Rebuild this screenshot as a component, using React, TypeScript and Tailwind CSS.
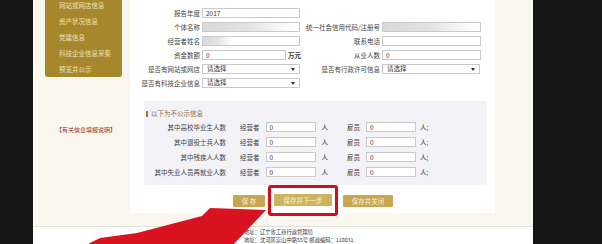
import React from 'react'

const font = { fontFamily: '"Noto Sans CJK SC", "Noto Sans", sans-serif' }

function Field({ value = '', blur = '', className = 'w-[98px]' }: { value?: string; blur?: string; className?: string }) {
    return (
        <div className={`relative h-[10px] shrink-0 border border-[#c9c9c9] bg-white text-[6.5px] leading-[8px] pl-[3px] text-[#333] overflow-hidden ${className}`}>
            {blur && <div className={`absolute inset-y-0 left-0 bg-gradient-to-r from-[#d9d9d9] via-[#e2e2e2] to-white ${blur}`} />}
            <span className="relative">{value}</span>
        </div>
    )
}

function Select() {
    return (
        <div className="h-[10px] w-[98px] shrink-0 border border-[#c9c9c9] bg-white flex items-center justify-between pl-[4px] pr-[4px] text-[6.5px] text-[#333]">
            <span>请选择</span>
            <svg width="4" height="3" viewBox="0 0 4 3"><path d="M0 0H4L2 3Z" fill="#333" /></svg>
        </div>
    )
}

function Label({ children, className = 'w-[70px]' }: { children: React.ReactNode; className?: string }) {
    return <div className={`shrink-0 text-right text-[6.5px] leading-[10px] text-[#444] whitespace-nowrap ${className}`}>{children}</div>
}

const menu = ['网站或网店信息', '资产状况信息', '党建信息', '科技企业信息采集', '预览并公示']
const privateRows = ['其中高校毕业生人数', '其中退役士兵人数', '其中残疾人人数', '其中失业人员再就业人数']

export default function App() {
    return (
        <div className="relative w-[602px] h-[244px] overflow-hidden flex bg-[#161616]" style={font}>
            <div className="w-[33px] shrink-0" />

            <div className="w-[500px] shrink-0 flex flex-col">
                {/* upper cream area */}
                <div className="h-[226px] shrink-0 bg-[#faf7ee] flex">
                    {/* sidebar */}
                    <div className="w-[97px] shrink-0">
                        <div className="ml-[12px] w-[77px] h-[77px] bg-[#a7872c] rounded-b-[3px] overflow-hidden">
                            <div className="mt-[-3px] pl-[14px]">
                                {menu.map(m => (
                                    <div key={m} className="h-[16px] leading-[16px] text-[6.5px] text-[#eee2bb] whitespace-nowrap">{m}</div>
                                ))}
                            </div>
                        </div>
                        <div className="mt-[49px] pl-[23px] text-[6px] leading-[8px] text-[#8e3131] whitespace-nowrap">【有关信息填报说明】</div>
                    </div>

                    {/* white panel */}
                    <div className="w-[365px] h-[213px] shrink-0 bg-white flex flex-col">
                        <div className="pt-[8px] flex flex-col gap-[4px]">
                            <div className="flex gap-[2px]">
                                <Label>报告年度</Label>
                                <Field value="2017" />
                            </div>
                            <div className="flex gap-[2px]">
                                <Label>个体名称</Label>
                                <Field blur="w-[90px]" />
                                <Label className="w-[78px]">统一社会信用代码/注册号</Label>
                                <Field blur="w-[90px]" className="w-[99px]" />
                            </div>
                            <div className="flex gap-[2px]">
                                <Label>经营者姓名</Label>
                                <Field blur="w-[28px]" />
                                <Label className="w-[78px]">联系电话</Label>
                                <Field className="w-[99px]" />
                            </div>
                            <div className="flex gap-[2px]">
                                <Label>资金数额</Label>
                                <div className="w-[98px] shrink-0 flex gap-[2px] whitespace-nowrap">
                                    <Field value="0" className="w-[84px]" />
                                    <span className="text-[6.5px] leading-[10px] font-bold text-[#333]">万元</span>
                                </div>
                                <Label className="w-[78px]">从业人数</Label>
                                <Field value="0" className="w-[99px]" />
                            </div>
                            <div className="flex gap-[2px]">
                                <Label>是否有网站或网店</Label>
                                <Select />
                                <Label className="w-[78px]">是否有行政许可信息</Label>
                                <div className="w-[99px]"><Select /></div>
                            </div>
                            <div className="flex gap-[2px]">
                                <Label>是否有科技企业信息</Label>
                                <Select />
                            </div>
                        </div>

                        {/* not public block */}
                        <div className="mt-[13px] ml-[14px] w-[343px] bg-[#f3f2f7] pt-[9px] pb-[8px]">
                            <div className="flex items-center gap-[3px] pl-[2px] h-[8px]">
                                <div className="w-[2px] h-[6px] bg-[#9a7a2e]" />
                                <span className="text-[6.5px] text-[#8c7048]">以下为不公示信息</span>
                            </div>
                            <div className="mt-[4px] flex flex-col gap-[5px]">
                                {privateRows.map(r => (
                                    <div key={r} className="flex items-center h-[10px] text-[6.5px] leading-[10px] text-[#444] whitespace-nowrap">
                                        <div className="w-[82px] text-right">{r}</div>
                                        <span className="ml-[14px]">经营者</span>
                                        <Field value="0" className="ml-[6px] w-[50px]" />
                                        <span className="ml-[6px]">人</span>
                                        <span className="ml-[19px]">雇员</span>
                                        <Field value="0" className="ml-[6px] w-[50px]" />
                                        <span className="ml-[4px]">人;</span>
                                    </div>
                                ))}
                            </div>
                        </div>

                        {/* buttons */}
                        <div className="flex items-center pl-[103px] text-[6.5px] text-[#fbf3dc] whitespace-nowrap">
                            <div className="w-[32px] h-[12px] leading-[12px] text-center bg-[#c8a64e] rounded-[1px]">保 存</div>
                            <div className="ml-[3px] border-[3px] border-[#d10d1e] rounded-[3px] px-[3px] pt-[6px] pb-[7px]">
                                <div className="w-[58px] h-[12px] leading-[12px] text-center bg-[#cfb25e] rounded-[1px]">保存并下一步</div>
                            </div>
                            <div className="ml-[5px] w-[50px] h-[12px] leading-[12px] text-center bg-[#c8a64e] rounded-[1px]">保存并关闭</div>
                        </div>
                    </div>

                    <div className="flex-1" />
                </div>

                {/* footer */}
                <div className="flex-1 bg-white border-t border-[#e3e1da] pl-[211px] pt-[2px] text-[5.3px] leading-[7.5px] text-[#333] whitespace-nowrap">
                    <div>地址：辽宁省工商行政管理局</div>
                    <div>地址：沈河区崇山中路55号 邮政编码：110031</div>
                </div>
            </div>

            <div className="flex-1" />

            {/* red pointer arrow drawn over the page */}
            <svg className="absolute inset-0 pointer-events-none" width="602" height="244" viewBox="0 0 602 244">
                <polygon points="84,246 100,238 137,233 202,216 210,208 266,210 232,246" fill="#d9121f" />
            </svg>
        </div>
    )
}
